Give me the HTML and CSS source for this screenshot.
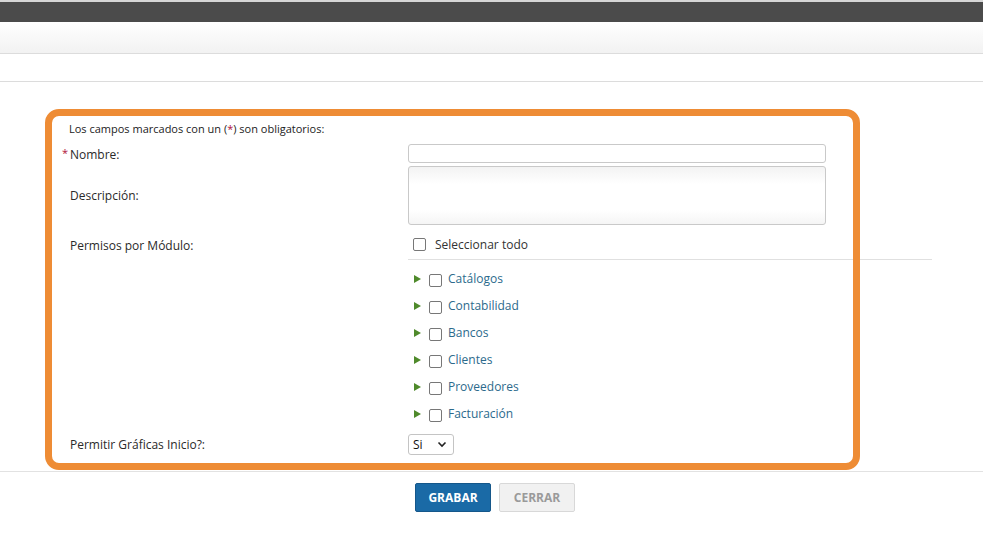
FILE: index.html
```html
<!DOCTYPE html>
<html lang="es">
<head>
<meta charset="utf-8">
<title>Perfil</title>
<link rel="stylesheet" href="styles.css">
</head>
<body>
<div class="topbar"></div>
<div class="header"></div>
<div class="subheader"></div>
<main class="main">
  <form class="form">
    <p class="notice">Los campos marcados con un (<span class="req">*</span>) son obligatorios:</p>
    <div class="row row-name">
      <label class="label"><span class="ast">*</span>Nombre:</label>
      <div class="input"></div>
    </div>
    <div class="row row-desc">
      <label class="label">Descripción:</label>
      <div class="textarea"></div>
    </div>
    <div class="row row-perm">
      <label class="label">Permisos por Módulo:</label>
      <div class="selall"><span class="cb"></span><span>Seleccionar todo</span></div>
    </div>
    <div class="row">
      <span></span>
      <ul class="tree">
        <li><span class="tri"></span><span class="cb"></span><span class="node">Catálogos</span></li>
        <li><span class="tri"></span><span class="cb"></span><span class="node">Contabilidad</span></li>
        <li><span class="tri"></span><span class="cb"></span><span class="node">Bancos</span></li>
        <li><span class="tri"></span><span class="cb"></span><span class="node">Clientes</span></li>
        <li><span class="tri"></span><span class="cb"></span><span class="node">Proveedores</span></li>
        <li><span class="tri"></span><span class="cb"></span><span class="node">Facturación</span></li>
      </ul>
    </div>
    <div class="row row-graf">
      <label class="label">Permitir Gráficas Inicio?:</label>
      <div class="select"><span>Si</span><svg width="10" height="7" viewBox="0 0 10 7"><path d="M1.5 1.5 L5 5 L8.5 1.5" fill="none" stroke="#222" stroke-width="1.6"/></svg></div>
    </div>
  </form>
  <div class="actions">
    <button type="button" class="btn btn-primary">GRABAR</button>
    <button type="button" class="btn btn-disabled">CERRAR</button>
  </div>
  <div class="highlight"></div>
</main>
</body>
</html>
```
FILE: styles.css
```css
* { box-sizing: border-box; }
html, body { margin: 0; padding: 0; background: #fff; }
body {
  font-family: "Open Sans", "Liberation Sans", sans-serif;
  font-size: 12px;
  color: #2a2a2a;
  position: relative;
}
.topbar {
  height: 22px;
  border-top: 2px solid #d6d6d6;
  background: #4b4b4b;
}
.header {
  height: 32px;
  background: linear-gradient(#ffffff, #f2f2f2);
  border-bottom: 1px solid #dcdcdc;
}
.subheader {
  height: 28px;
  background: #fff;
  border-bottom: 1px solid #dcdcdc;
}
.main { position: relative; }
.form {
  margin: 0;
  padding: 39px 0 16px 62px;
  border-bottom: 1px solid #e2e2e2;
}
.notice {
  margin: 0;
  padding-left: 7px;
  font-size: 11px;
  line-height: 16px;
  color: #222;
}
.req { color: #b0123a; }
.row {
  display: grid;
  grid-template-columns: 346px auto;
  align-items: center;
}
.label {
  padding-left: 8px;
  font-size: 12px;
  color: #2a2a2a;
}
.ast {
  display: inline-block;
  width: 8px;
  margin-left: -8px;
  color: #b0123a;
  font-size: 11px;
  vertical-align: 2px;
}
.row-name { margin-top: 7px; }
.input {
  width: 418px;
  height: 19px;
  border: 1px solid #c9c9c9;
  border-radius: 3px;
  background: #fff;
}
.row-desc { margin-top: 3px; }
.textarea {
  width: 418px;
  height: 59px;
  border: 1px solid #c9c9c9;
  border-radius: 3px;
  background: linear-gradient(#f3f3f3, #fff 30%, #fff 75%, #f5f5f5);
}
.row-perm { margin-top: 5px; }
.selall {
  width: 524px;
  height: 30px;
  display: flex;
  align-items: center;
  gap: 9px;
  padding-left: 5px;
  border-bottom: 1px solid #e0e0e0;
  color: #333;
}
.cb {
  display: inline-block;
  width: 13px;
  height: 13px;
  border: 1.5px solid #777;
  border-radius: 2px;
  background: #fff;
  flex: none;
}
.tree {
  list-style: none;
  margin: 0;
  padding: 6px 0 0 6px;
}
.tree li {
  height: 27px;
  display: flex;
  align-items: center;
}
.tri {
  width: 0;
  height: 0;
  border-top: 4px solid transparent;
  border-bottom: 4px solid transparent;
  border-left: 7px solid #4f8a2b;
  margin-right: 8px;
  margin-top: -2px;
}
.tree .cb { margin-top: 2px; }
.node {
  margin-left: 6px;
  color: #2c6a8c;
  margin-top: -2px;
}
.row-graf { margin-top: 6px; }
.select {
  width: 46px;
  height: 21px;
  border: 1px solid #c4c4c4;
  border-radius: 3px;
  display: flex;
  align-items: center;
  justify-content: space-between;
  padding: 0 6px 0 4px;
  color: #111;
  background: #fff;
}
.actions {
  display: flex;
  justify-content: center;
  gap: 8px;
  padding: 11px 0 0 7px;
}
.btn {
  font-family: "Open Sans", "Liberation Sans", sans-serif;
  font-weight: 700;
  font-size: 12px;
  width: 76px;
  height: 29px;
  border-radius: 2px;
  cursor: pointer;
}
.btn-primary {
  background: #1a6aa6;
  border: 1px solid #15578a;
  color: #fff;
}
.btn-disabled {
  background: #f1f1f1;
  border: 1px solid #d8d8d8;
  color: #9a9a9a;
}
.highlight {
  position: absolute;
  left: 45px;
  top: 27px;
  width: 815px;
  height: 361px;
  border: 7px solid #ee8c35;
  border-radius: 14px;
  pointer-events: none;
}
```
